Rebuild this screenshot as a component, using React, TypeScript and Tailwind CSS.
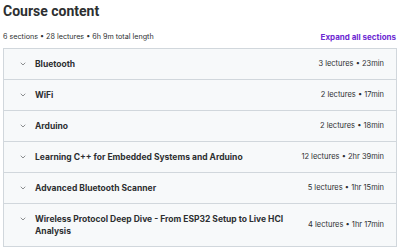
import { ChevronDown } from 'lucide-react'

const sections = [
  { title: 'Bluetooth', meta: '3 lectures • 23min' },
  { title: 'WiFi', meta: '2 lectures • 17min' },
  { title: 'Arduino', meta: '2 lectures • 18min' },
  { title: 'Learning C++ for Embedded Systems and Arduino', meta: '12 lectures • 2hr 39min' },
  { title: 'Advanced Bluetooth Scanner', meta: '5 lectures • 1hr 15min' },
  { title: 'Wireless Protocol Deep Dive - From ESP32 Setup to Live HCI Analysis', meta: '4 lectures • 1hr 17min' },
]

export default function App() {
  return (
    <div className="w-[400px] h-[249px] bg-white px-[3px] pt-[2px] font-['Inter',sans-serif] text-[#2d2f31]">
      <h2 className="font-['Roboto',sans-serif] text-[14px] font-bold leading-[18px]">Course content</h2>
      <div className="flex items-end justify-between mt-[12px] mb-[6px] pr-[1px]">
        <span className="text-[7.2px] leading-[10px] text-[#2d2f31]">6 sections • 28 lectures • 6h 9m total length</span>
        <button className="text-[8px] leading-[10px] font-bold text-[#6d28d2]">Expand all sections</button>
      </div>

      {/* Section list */}
      <div className="border border-[#d1d7dc] w-[394px]">
        {sections.map((s, i) => (
          <div
            key={s.title}
            className={`flex items-center justify-between bg-[#f7f9fa] pl-[15px] pr-[12px] py-[9px] ${i > 0 ? 'border-t border-[#d1d7dc]' : ''}`}
          >
            <div className="flex items-start gap-[8px] min-w-0">
              <ChevronDown className="w-[8px] h-[8px] mt-[2px] shrink-0 text-[#2d2f31]" strokeWidth={1.6} />
              <span className="text-[8.5px] font-bold leading-[12px] max-w-[262px]">{s.title}</span>
            </div>
            <span className="text-[7.5px] leading-[10px] text-[#2d2f31] shrink-0">{s.meta}</span>
          </div>
        ))}
      </div>
    </div>
  )
}
